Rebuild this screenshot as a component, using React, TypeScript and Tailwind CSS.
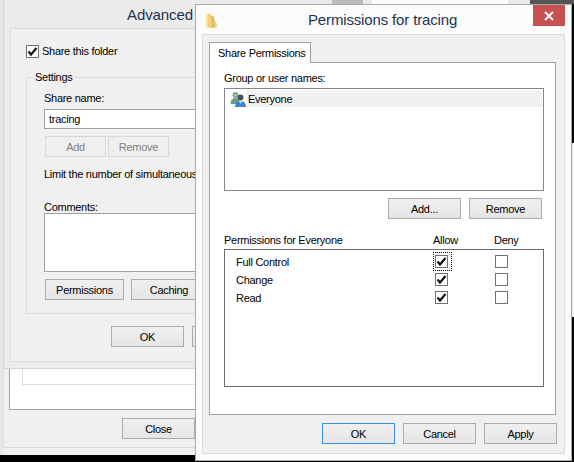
function Button({
  children,
  className = "",
  disabled = false,
  focused = false,
}: {
  children: React.ReactNode
  className?: string
  disabled?: boolean
  focused?: boolean
}) {
  let look = "border-[#acacac] bg-gradient-to-b from-[#f0f0f0] to-[#e5e5e5] text-black"
  if (disabled) look = "border-[#d9d9d9] bg-[#efefef] text-[#838383]"
  if (focused) look = "border-[#3c90e4] bg-gradient-to-b from-[#f0f0f0] to-[#e5e5e5] text-black"
  return (
    <div className={`flex h-[21px] shrink-0 items-center justify-center border ${look} ${className}`}>
      {children}
    </div>
  )
}

function Check({ checked = false, focused = false }: { checked?: boolean; focused?: boolean }) {
  return (
    <div className="relative h-[13px] w-[13px] border border-[#707070] bg-white">
      {checked && (
        <svg viewBox="0 0 11 11" className="absolute left-0 top-0 h-[11px] w-[11px]">
          <path d="M1.5 5.5 L4 8.5 L9.5 2" fill="none" stroke="#111" strokeWidth="2.2" />
        </svg>
      )}
      {focused && (
        <div className="absolute -left-[3px] -top-[4px] h-[19px] w-[19px] border border-dotted border-black" />
      )}
    </div>
  )
}

function FolderIcon() {
  return (
    <svg viewBox="0 0 14 16" className="h-[16px] w-[14px]">
      <path d="M9 5 L13 13 L10 15 Z" fill="#d8d8d0" />
      <path d="M1 1 L5 0.5 L6 3 L6 14 L1 15 Z" fill="#f7e49c" />
      <path d="M6 3 L9 3.5 L10 14.5 L4 15 L6 13 Z" fill="#e3bb55" />
      <path d="M3 1.5 L6 1 L7 13 L3 14.5 Z" fill="#f2d27a" />
    </svg>
  )
}

function UsersIcon() {
  return (
    <svg viewBox="0 0 16 16" className="h-4 w-4 shrink-0">
      <circle cx="5.5" cy="4" r="3" fill="#7fa38a" />
      <path d="M0.5 13 Q0.5 7 5.5 7 Q10 7 10 13 Z" fill="#6f9a7c" />
      <circle cx="5.5" cy="4" r="1.5" fill="#a9c4ae" />
      <circle cx="10.5" cy="6.5" r="3" fill="#4a5360" />
      <path d="M5 16 Q5 10 10.5 10 Q16 10 16 16 Z" fill="#3f86c9" />
      <path d="M9 10 L12 10 L10.5 13 Z" fill="#cfe3f5" />
    </svg>
  )
}

const rows = [
  { name: "Full Control", focused: true },
  { name: "Change", focused: false },
  { name: "Read", focused: false },
]

export default function App() {
  return (
    <div className="relative h-[462px] w-[574px] overflow-hidden bg-black font-['Liberation_Sans',sans-serif] text-[11px] leading-[16px] tracking-[-0.28px] text-black">
      {/* what is left of the window behind, with the Close button */}
      <div className="absolute left-0 top-0 h-[455px] w-[572px] border-l-[3px] border-[#e6e6e6] bg-[#f0f0f0]">
        <div className="h-[448px] border-b border-l border-[#dcdcdc] pl-[5px]">
          <div className="h-[410px] border-b border-l border-[#a0a0a0] bg-white pl-[12px]">
            <div className="h-[385px] w-[300px] border-b border-l border-[#dcdcdc]" />
          </div>
          <div className="pl-[113px] pt-[8px]">
            <Button className="w-[73px]">Close</Button>
          </div>
        </div>
      </div>

      {/* Advanced Sharing */}
      <div className="absolute left-[3px] top-0 h-[369px] w-[300px] border-b border-l border-[#d6d6d6] bg-[#ebebeb] pl-[6px]">
        <div className="pt-[6px] pl-[117px] text-[15px] leading-[17px] tracking-[-0.1px] text-[#1b3350]">Advanced</div>
        <div className="mt-[5px] h-[334px] border-b border-l border-t border-[#dcdcdc] bg-[#f0f0f0] pl-[15px] pt-[14px] whitespace-nowrap">
          <div className="flex items-center gap-[3px]">
            <Check checked />
            <span>Share this folder</span>
          </div>
          <div className="relative mt-[18px] h-[237px] border-b border-l border-t border-[#dcdcdc] pl-[17px] pt-[12px]">
            <span className="absolute -top-[9px] left-[7px] bg-[#f0f0f0] px-px">Settings</span>
            <div>Share name:</div>
            <div className="mt-[3px] flex h-[20px] items-center border border-[#a0a0a0] bg-white pl-[4px]">tracing</div>
            <div className="mt-[7px] flex gap-[2px] pl-px">
              <Button disabled className="w-[61px]">Add</Button>
              <Button disabled className="w-[61px]">Remove</Button>
            </div>
            <div className="mt-[9px]">Limit the number of simultaneous users to:</div>
            <div className="mt-[17px]">Comments:</div>
            <div className="mt-[-2px] h-[59px] border border-[#a0a0a0] bg-white" />
            <div className="mt-[7px] flex gap-[7px] pl-px">
              <Button className="w-[79px]">Permissions</Button>
              <Button className="w-[76px]">Caching</Button>
            </div>
          </div>
          <div className="mt-[12px] flex gap-[8px] pl-[85px]">
            <Button className="w-[73px]">OK</Button>
            <Button className="w-[73px]">Cancel</Button>
          </div>
        </div>
      </div>

      {/* window strip along the top and right edges */}
      <div className="absolute left-[195px] top-0 flex h-[4px] w-[379px]">
        <div className="w-[137px] bg-[#e9e9e9]" />
        <div className="w-[31px] bg-[#bbbbbb]" />
        <div className="w-[9px] bg-[#e9e9e9]" />
        <div className="w-[136px] bg-white" />
        <div className="w-[22px] bg-[#e9e9e9]" />
        <div className="flex-1 bg-[#555]" />
      </div>
      <div className="absolute left-[572px] top-[143px] h-[174px] w-[2px] bg-[#f0f0f0]" />

      {/* Permissions for tracing */}
      <div className="absolute left-[195px] top-[4px] h-[457px] w-[377px] border border-[#a9a9a9] bg-[#fbfbfb] pl-[6px]">
        <div className="relative flex h-[29px] items-center">
          <div className="pl-[3px] pt-[3px]">
            <FolderIcon />
          </div>
          <div className="ml-[89px] pt-px text-[15px] leading-[18px] tracking-[-0.15px] text-[#1b3350]">Permissions for tracing</div>
          <div className="absolute right-[6px] top-0 flex h-[21px] w-[32px] items-center justify-center bg-[#c75050]">
            <svg viewBox="0 0 10 10" className="h-[10px] w-[10px]">
              <path d="M1 1 L9 9 M9 1 L1 9" stroke="white" strokeWidth="2" />
            </svg>
          </div>
        </div>
        <div className="h-[420px] w-[363px] border border-[#dcdcdc] bg-[#f0f0f0] pl-[6px] pt-[7px]">
          <div className="relative z-10 -mb-px flex h-[21px] w-[102px] items-center whitespace-nowrap border border-b-0 border-[#a0a0a0] bg-white pl-[8px]">
            Share Permissions
          </div>
          <div className="h-[353px] w-[347px] border border-[#a0a0a0] bg-white pl-[14px] pt-[7px]">
            <div>Group or user names:</div>
            <div className="mt-[2px] h-[103px] w-[320px] border border-[#828790] bg-white p-px">
              <div className="flex h-[17px] items-center pl-[4px]">
                <UsersIcon />
                <span className="ml-px flex h-full flex-1 items-center bg-[#f0f0f0] pl-[1px]">Everyone</span>
              </div>
            </div>
            <div className="mt-[7px] flex w-[318px] justify-end gap-[8px]">
              <Button className="w-[73px]">Add...</Button>
              <Button className="w-[73px]">Remove</Button>
            </div>
            <div className="relative mt-[12px] flex h-[18px] w-[320px] items-center">
              <span>Permissions for Everyone</span>
              <span className="absolute left-[209px]">Allow</span>
              <span className="absolute left-[270px]">Deny</span>
            </div>
            <div className="flex h-[138px] w-[320px] flex-col gap-[5px] border border-[#6b6b6b] pt-[5px]">
              {rows.map((row) => (
                <div key={row.name} className="flex h-[13px] items-center pl-[11px]">
                  <span className="w-[199px]">{row.name}</span>
                  <Check checked focused={row.focused} />
                  <div className="ml-[47px]">
                    <Check />
                  </div>
                </div>
              ))}
            </div>
          </div>
          <div className="mt-[8px] flex gap-[8px] pl-[113px]">
            <Button focused className="w-[73px]">OK</Button>
            <Button className="w-[73px]">Cancel</Button>
            <Button className="w-[73px]">Apply</Button>
          </div>
        </div>
      </div>
    </div>
  )
}
